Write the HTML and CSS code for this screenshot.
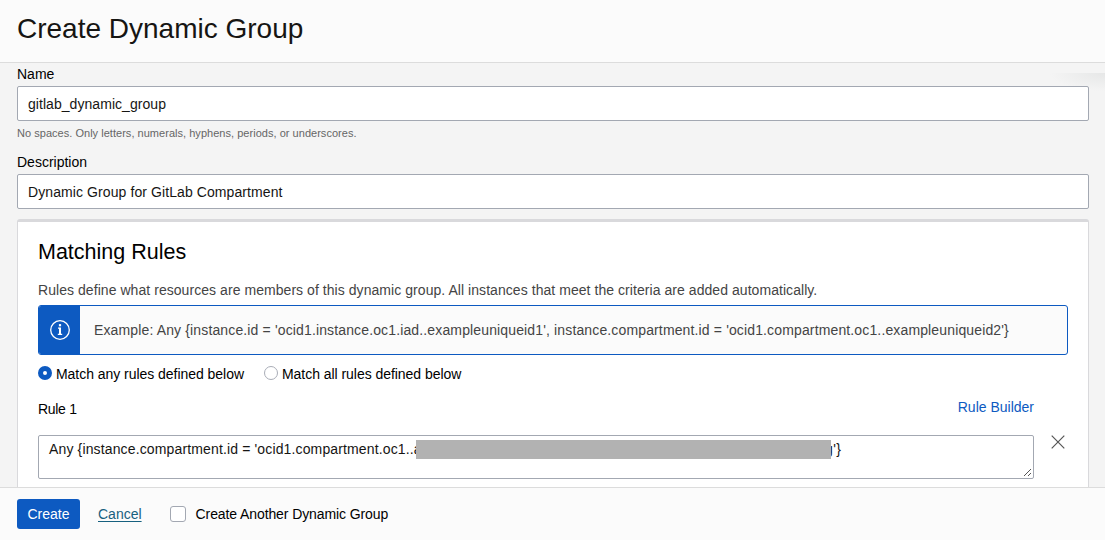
FILE: index.html
```html
<!DOCTYPE html>
<html lang="en">
<head>
<meta charset="utf-8">
<title>Create Dynamic Group</title>
<link rel="stylesheet" href="styles.css">
</head>
<body>
<div class="dialog">
  <header class="header"><h1 class="title">Create Dynamic Group</h1></header>
  <main class="content">
    <div class="corner-shadow"></div>
    <label class="label">Name</label>
    <div class="field field-name"><span>gitlab_dynamic_group</span></div>
    <p class="hint">No spaces. Only letters, numerals, hyphens, periods, or underscores.</p>
    <label class="label">Description</label>
    <div class="field"><span>Dynamic Group for GitLab Compartment</span></div>
    <section class="card">
      <h2 class="card-title">Matching Rules</h2>
      <p class="intro">Rules define what resources are members of this dynamic group. All instances that meet the criteria are added automatically.</p>
      <div class="info">
        <div class="info-icon">
          <svg width="20" height="20" viewBox="0 0 20 20" fill="none" stroke="#fff">
            <circle cx="10" cy="10" r="9.3" stroke-width="1.3"/>
            <path d="M8 8.2h1.2M7.8 14.3h4.4" stroke-width="1.3"/>
            <path d="M10 7.6v7" stroke-width="2"/>
            <rect x="8.9" y="4.1" width="2.2" height="2.2" fill="#fff" stroke="none"/>
          </svg>
        </div>
        <div class="info-text"><span>Example: Any {instance.id = 'ocid1.instance.oc1.iad..exampleuniqueid1', instance.compartment.id = 'ocid1.compartment.oc1..exampleuniqueid2'}</span></div>
      </div>
      <div class="radios">
        <span class="radio radio-on"></span><span class="radio-label">Match any rules defined below</span>
        <span class="radio radio-next"></span><span class="radio-label">Match all rules defined below</span>
      </div>
      <div class="rule-head"><span class="rule-name">Rule 1</span><a class="builder">Rule Builder</a></div>
      <div class="rule-row">
        <div class="rule-input">
          <span class="rule-start">Any {instance.compartment.id = 'ocid1.compartment.oc1..a</span><span class="redaction"></span><span class="rule-end">g'}</span>
          <svg class="grip" width="9" height="9" viewBox="0 0 9 9" stroke="#555" fill="none"><path d="M1 8L8 1M5 8L8 5"/></svg>
        </div>
        <svg class="remove" width="14" height="14" viewBox="0 0 14 14" stroke="#555" stroke-width="1.2"><path d="M.7.7l12.6 12.6M13.3.7L.7 13.3"/></svg>
      </div>
    </section>
  </main>
  <footer class="footer">
    <button class="create">Create</button>
    <a class="cancel">Cancel</a>
    <span class="checkbox"></span>
    <span class="another">Create Another Dynamic Group</span>
  </footer>
</div>
</body>
</html>
```
FILE: styles.css
```css
* { box-sizing: border-box; }
body { margin: 0; font: 14px/20px "Liberation Sans", Arial, sans-serif; color: #161513; }
h1, h2, p { margin: 0; font-weight: 400; }
span, a, label, p, h1, h2 { white-space: nowrap; }
.dialog { display: flex; flex-direction: column; height: 540px; overflow: hidden; background: #f4f4f4; }
.header { flex: none; height: 63px; padding: 10px 17px; background: #fbfbfb; border-bottom: 1px solid #dcdcdc; }
.title { font-size: 28px; line-height: 38px; }
.content { position: relative; flex: 1; min-height: 0; overflow: hidden; padding: 2px 16px 0 17px; }
.corner-shadow { position: absolute; right: 0; top: 10px; width: 55px; height: 18px; background: radial-gradient(ellipse farthest-side at 100% 0, #e6e7e7, rgba(244, 244, 244, 0)); }
.label { display: block; height: 21px; line-height: 18px; color: #000; }
.field { position: relative; display: flex; align-items: center; height: 35px; padding: 1px 10px 0; background: #fff; border: 1px solid #a3a8b2; border-radius: 2px; letter-spacing: .09px; }
.field-name { letter-spacing: .05px; }
.hint { font-size: 11px; line-height: 16px; margin: 4px 0 12px; color: #666; letter-spacing: .03px; }
.card { margin-top: 10px; height: 300px; padding: 16px 20px; background: #fff; border: 1px solid #d9d9dc; border-top-width: 3px; border-radius: 3px 3px 0 0; }
.card-title { font-size: 21.5px; line-height: 28px; color: #000; }
.intro { margin-top: 14px; color: #444; letter-spacing: .055px; }
.info { display: flex; height: 50px; margin-top: 5px; border: 1px solid #0d5ac1; border-radius: 3px; background: #fbfbfb; overflow: hidden; }
.info-icon { display: flex; align-items: center; justify-content: center; width: 41px; padding-left: 1px; background: #0d5ac1; }
.info-text { display: flex; align-items: center; padding-left: 14px; color: #444; letter-spacing: .138px; }
.radios { display: flex; align-items: center; height: 20px; margin-top: 9px; color: #000; letter-spacing: -.04px; }
.radio { width: 14px; height: 14px; margin-right: 4px; margin-bottom: 2px; border: 1px solid #a9adb7; border-radius: 50%; background: #fff; }
.radio-on { border: 5px solid #0d5ac1; }
.radio-next { margin-left: 20px; }
.rule-head { display: flex; justify-content: space-between; height: 22px; margin-top: 13px; padding-right: 34px; }
.rule-name { padding-top: 2px; letter-spacing: -.3px; color: #000; }
.builder { color: #0d5ac1; }
.rule-row { display: flex; margin-top: 16px; }
.rule-input { position: relative; display: flex; width: 996px; height: 44px; padding: 3px 10px; border: 1px solid #a3a8b2; border-radius: 2px; }
.rule-start { flex: none; width: 367px; letter-spacing: .14px; }
.redaction { flex: none; position: relative; width: 415px; height: 19px; margin-top: 1px; background: #b2b2b2; }
.rule-end { margin-left: -6px; letter-spacing: .4px; }
.grip { position: absolute; right: 1px; bottom: 1px; }
.remove { margin-left: 17px; }
.footer { flex: none; display: flex; align-items: center; height: 53px; padding: 0 17px; background: #fbfbfb; border-top: 1px solid #dcdcdc; }
.create { width: 63px; height: 30px; padding: 0; border: 0; border-radius: 3px; background: #0d5ac1; color: #fff; font: inherit; }
.cancel { margin-left: 18px; color: #17607f; text-decoration: underline; text-underline-offset: 2px; }
.checkbox { width: 16px; height: 16px; margin-left: 28px; border: 1px solid #a3a8b2; border-radius: 3px; background: #fff; }
.another { margin-left: 10px; padding-bottom: 1px; color: #000; letter-spacing: -.1px; }
```
